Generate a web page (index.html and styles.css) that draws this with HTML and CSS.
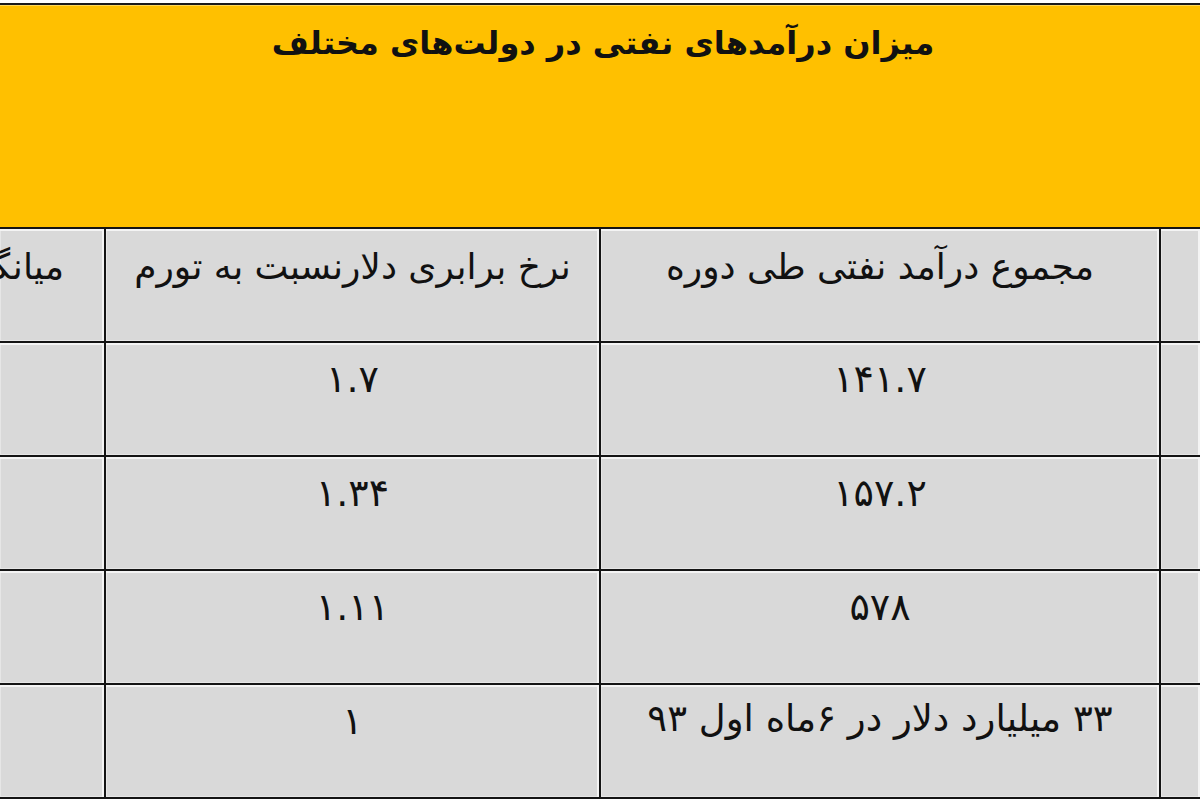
FILE: index.html
```html
<!DOCTYPE html>
<html lang="fa" dir="rtl">
<head>
<meta charset="utf-8">
<title>میزان درآمدهای نفتی در دولت‌های مختلف</title>
<link rel="stylesheet" href="styles.css">
</head>
<body>
<div class="sheet">
  <div class="title-bar">
    <h1 class="title">میزان درآمدهای نفتی در دولت‌های مختلف</h1>
  </div>
  <div class="grid">
    <div class="cell"></div>
    <div class="cell">مجموع درآمد نفتی طی دوره</div>
    <div class="cell">نرخ برابری دلارنسبت به تورم</div>
    <div class="cell cell-clip"><span class="clip-text">میانگین قیمت نفت</span></div>

    <div class="cell"></div>
    <div class="cell num">۱۴۱.۷</div>
    <div class="cell num">۱.۷</div>
    <div class="cell"></div>

    <div class="cell"></div>
    <div class="cell num">۱۵۷.۲</div>
    <div class="cell num">۱.۳۴</div>
    <div class="cell"></div>

    <div class="cell"></div>
    <div class="cell num">۵۷۸</div>
    <div class="cell num">۱.۱۱</div>
    <div class="cell"></div>

    <div class="cell"></div>
    <div class="cell long">۳۳ میلیارد دلار در ۶ماه اول ۹۳</div>
    <div class="cell num">۱</div>
    <div class="cell"></div>
  </div>
</div>
</body>
</html>
```
FILE: styles.css
```css
html, body {
  margin: 0;
  padding: 0;
  background: #ffffff;
}

body {
  font-family: "DejaVu Sans", "Noto Sans", sans-serif;
  color: #111111;
  width: 1200px;
  height: 800px;
  overflow: hidden;
}

.sheet {
  margin-top: 3px;
}

.title-bar {
  background: #ffc000;
  border-top: 2px solid #1a1a1a;
  height: 222px;
  box-shadow: inset 0 1px 0 #ffd85a;
}

.title {
  margin: 0;
  padding-top: 18px;
  font-size: 32px;
  line-height: 40px;
  font-weight: bold;
  text-align: center;
  padding-left: 6px;
}

.grid {
  display: grid;
  grid-template-columns: 39px 558px 493px 104px;
  grid-auto-rows: 112px;
  gap: 2px;
  background: #141414;
  padding: 2px 0;
}

.cell {
  background: #d9d9d9;
  box-shadow: inset -2px 2px 0 #f4f4f4, inset 1px -1px 0 #e6e6e6;
  text-align: center;
  font-size: 36px;
  line-height: 44px;
  padding-top: 16px;
  white-space: nowrap;
  overflow: hidden;
}

.num {
  font-size: 38px;
  padding-top: 14px;
}

.long {
  font-size: 37px;
  padding-top: 12px;
}

.cell-clip {
  text-align: right;
  padding-right: 40px;
}

.clip-text {
  display: inline-block;
}
```
